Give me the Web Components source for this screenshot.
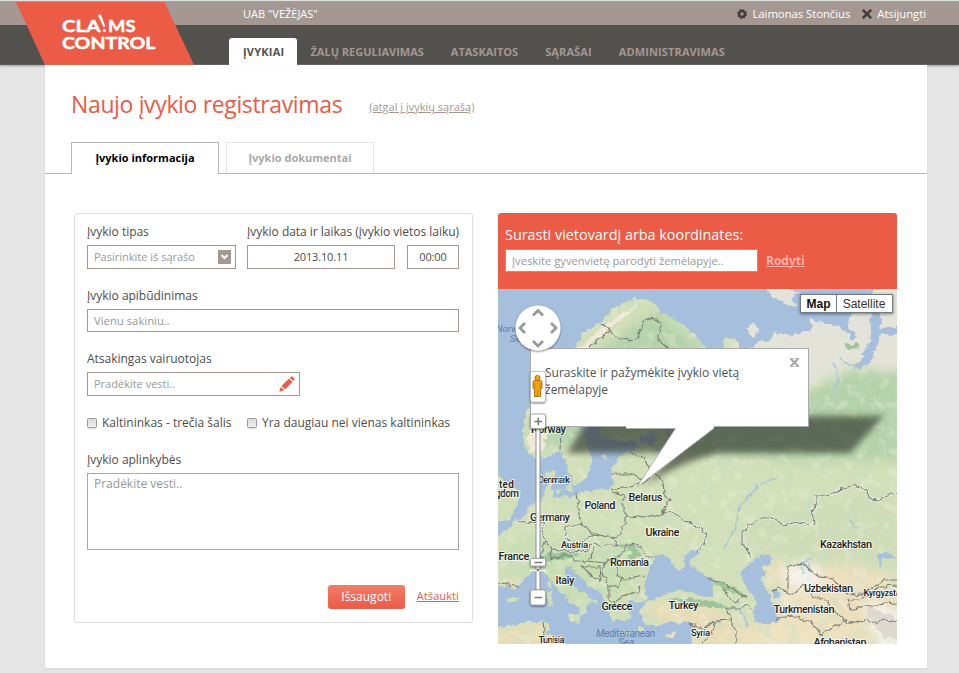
<!DOCTYPE html>
<html lang="lt">
<head>
<meta charset="utf-8">
<title>Claims Control</title>
<style>
html,body{margin:0;padding:0}
body{background:#e5e5e5;font:12px/16px "Open Sans","Noto Sans",sans-serif;color:#4d4d4d;width:959px;height:673px;overflow:hidden}
</style>
</head>
<body>
<claims-app></claims-app>
<script>
function define(name, html, setup){
  const t=document.createElement('template');
  t.innerHTML=html;
  customElements.define(name,class extends HTMLElement{
    connectedCallback(){
      if(this.shadowRoot)return;
      this.attachShadow({mode:'open'}).appendChild(t.content.cloneNode(true));
      if(setup)setup(this,this.shadowRoot);
    }
  });
}

define('claims-logo',`
<style>:host{display:block;width:178px;height:63px}svg{display:block}text{font-family:Lato,sans-serif;font-weight:700;fill:#fff;stroke:#fff;stroke-width:.5px;font-size:17.500px}</style>
<svg width="178" height="63" viewBox="16 2 178 63">
<path d="M16 2H164.500L194 65H45Z" fill="#eb5b45"/>
<text x="62" y="32" textLength="38.500" lengthAdjust="spacingAndGlyphs">CLA</text>
<path d="M97.800 15.200L100.800 14.300L105.300 26.500L103.700 27.200Z" fill="#fff"/><circle cx="104.300" cy="30.400" r="1.500" fill="#fff"/>
<text x="108" y="32" textLength="27.500" lengthAdjust="spacingAndGlyphs">MS</text>
<text x="62" y="48.500" textLength="93.500" lengthAdjust="spacingAndGlyphs">CONTROL</text>
</svg>`);

define('nav-item',`
<style>:host{display:block;box-sizing:border-box;height:27px;padding:0 13.500px;font-weight:700;font-size:11px;line-height:28px;color:#a59791;white-space:nowrap}
:host([active]){background:#fff;color:#53514e;border-radius:3px 3px 0 0;letter-spacing:.22px;width:68px;padding:0 0 0 14px}
:host([wide]){letter-spacing:.12px}</style><slot></slot>`);

define('user-link',`
<style>:host{display:flex;align-items:center;gap:5px;color:#fff}svg{display:block}</style>
<slot name="icon"></slot><span><slot></slot></span>`);

define('app-header',`
<style>
:host{display:grid;grid-template-columns:178px 1fr;grid-template-rows:25px 40px;height:65px;padding-left:16px;
background:linear-gradient(#dfe3e0 0 1px,#a5a09c 1px 2px,#a59791 2px 25px,#53514e 25px 64px,#5c5b59 64px 65px);box-shadow:0 1px 2px #999}
claims-logo{grid-row:1/3;margin-top:2px}
.top{display:flex;align-items:center;padding:3px 33px 0 49px;color:#fff;font-size:11px}
.top span{flex:1}.top user-link+user-link{margin-left:12px}.top user-link{font-size:11.400px;letter-spacing:-.08px}
nav{display:flex;align-items:flex-end;padding-left:35px}
</style>
<claims-logo></claims-logo>
<div class="top"><span>UAB "VEŽĖJAS"</span>
<user-link><svg slot="icon" width="10" height="10" viewBox="0 0 10 10"><circle cx="5" cy="5" r="3" fill="none" stroke="#423e3c" stroke-width="2.500"/><circle cx="5" cy="5" r="4.300" fill="none" stroke="#423e3c" stroke-width="1.200" stroke-dasharray="1.690 1.690"/></svg>Laimonas Stončius</user-link>
<user-link><svg slot="icon" width="10" height="10" viewBox="0 0 10 10"><path d="M.8 .8L9.200 9.200M9.200 .8L.8 9.200" stroke="#423e3c" stroke-width="2.600"/></svg>Atsijungti</user-link></div>
<nav><nav-item active>ĮVYKIAI</nav-item><nav-item>ŽALŲ REGULIAVIMAS</nav-item><nav-item>ATASKAITOS</nav-item><nav-item wide>SĄRAŠAI</nav-item><nav-item wide>ADMINISTRAVIMAS</nav-item></nav>`);

define('page-tab',`
<style>:host{display:block;box-sizing:border-box;width:148px;height:31px;border:1px solid #e5e5e5;border-bottom:0;text-align:center;font-weight:700;font-size:11px;line-height:29px;color:#a9a9a9;background:#fff}
:host([active]){height:32px;border-color:#b8b8b8;color:#000}</style><slot></slot>`);

define('page-heading',`
<style>:host{display:flex;align-items:flex-start;gap:27px;height:32px}
h1{margin:0;font-weight:400;font-size:23px;line-height:32px;letter-spacing:-.36px;color:#eb5b45}
a{font-size:11px;line-height:16px;margin-top:11px;color:#a59791;text-decoration:underline}</style><h1><slot></slot></h1><a><slot name="back"></slot></a>`);

define('text-field',`
<style>:host{display:flex;flex-direction:column;gap:5px}
label{height:16px;white-space:nowrap;letter-spacing:-.02px}
.box{box-sizing:border-box;height:var(--h,24px);border:1px solid #a59791;background:#fff;display:flex;align-items:center;justify-content:space-between;padding:0 6px;font-size:var(--fs,11px);color:#999;line-height:16px}
:host([center]) .box{justify-content:center;color:#4d4d4d;letter-spacing:-.15px}
:host([area]) .box{align-items:flex-start;padding-top:2px;border-color:#a9a9a9}</style>
<label></label><div class="box"><span><slot></slot></span><slot name="icon"></slot></div>`,
(el,r)=>{const l=r.querySelector('label');if(el.hasAttribute('label'))l.textContent=el.getAttribute('label');else if(!el.hasAttribute('blank'))l.remove()});

define('check-item',`
<style>:host{display:flex;align-items:center;gap:5px;height:16px;white-space:nowrap}
i{box-sizing:border-box;width:10px;height:10px;border:1px solid #9b9b9b;border-radius:1.500px;background:linear-gradient(#ddd,#eee);box-shadow:0 1px 1px #ddd}</style><i></i><span><slot></slot></span>`);

define('event-form',`
<style>
:host{display:block;box-sizing:border-box;width:399px;height:410px;border:1px solid #ddd;border-radius:3px;padding:10px 13px 0 12px}
.row{display:flex}.row+.row,text-field.line{margin-top:19px}
.acts{margin-top:35px;display:flex;justify-content:flex-end;gap:12px;align-items:center}
button{all:unset;box-sizing:border-box;width:77px;height:24px;border-radius:3px;background:linear-gradient(#f47c6c,#eb5b45);color:#fff;text-align:center;font-size:12px;line-height:24px}
a{color:#eb5b45;text-decoration:underline;font-size:11px;line-height:16px;margin-top:-2px;letter-spacing:.1px}
svg{display:block}
</style>
<div class="row"><text-field label="Įvykio tipas" style="width:149px">Pasirinkite iš sąrašo<svg slot="icon" width="13" height="14" style="margin-right:-2px"><path d="M0 0H13V14H0Z" fill="#a59791"/><path d="M3.500 5L6.500 8L9.500 5" fill="none" stroke="#fff" stroke-width="2"/></svg></text-field>
<text-field label="Įvykio data ir laikas (įvykio vietos laiku)" center style="width:148px;margin-left:11px">2013.10.11</text-field>
<text-field blank center style="width:52px;margin-left:12px">00:00</text-field></div>
<text-field class="line" label="Įvykio apibūdinimas" style="--h:23px;--fs:11.300px">Vienu sakiniu..</text-field>
<text-field class="line" label="Atsakingas vairuotojas" style="width:213px">Pradėkite vesti..<svg slot="icon" width="16" height="16" viewBox="0 0 16 16" style="margin-right:-2px"><g fill="#eb5b45"><path d="M.5 15.500L1.700 10.800L5.200 14.300Z"/><path d="M2.600 9.800L10.100 2.600L13.400 5.900L6.100 13.400Z"/><path d="M10.900 1.800L12.200.6Q13 .1 13.700.7L15.300 2.300Q15.800 3 15.300 3.800L14.200 5.100Z"/></g><path d="M.5 15.500L1 13.500L2.500 15Z" fill="#d34735"/></svg></text-field>
<div class="row" style="margin-top:19px"><check-item style="width:160px">Kaltininkas - trečia šalis</check-item><check-item>Yra daugiau nei vienas kaltininkas</check-item></div>
<text-field area label="Įvykio aplinkybės" style="--h:77px;--fs:12px;margin-top:21px">Pradėkite vesti..</text-field>
<div class="acts"><button>Išsaugoti</button><a>Atšaukti</a></div>`);

define('map-callout',`
<style>:host{position:absolute;left:32px;top:59px;width:279px;height:140px}
.box{box-sizing:border-box;width:279px;height:79px;background:#fff;border:1px solid #aaa;padding:15px 14px;font-size:12px;line-height:17px;color:#4c535b}
svg{position:absolute;left:0;top:0;pointer-events:none}</style>
<div class="box"><slot></slot></div>
<svg width="279" height="140" viewBox="530 348 279 140"><path d="M626 426H714V428.500L637 487L675.500 428.500H626Z" fill="#fff"/><path d="M714 428L637 487L675.500 428.500M626 428.500H675" fill="none" stroke="#aaa" stroke-width=".8"/><path d="M790 358.500H799M790 366.500H799" stroke="#ccc"/><path d="M790.500 358.500L798.500 366.500M798.500 358.500L790.500 366.500" stroke="#a5a5a5" stroke-width="2"/></svg>`);

define('map-controls',`
<style>:host{position:absolute;inset:0}svg{display:block}
.type{position:absolute;right:4px;top:5px;display:flex;box-sizing:border-box;height:19px;border:1px solid #717b87;background:#fff;box-shadow:0 1px 3px #0007;font:12px/18px "Liberation Sans",sans-serif;color:#333}
b,span{display:block;text-align:center}b{width:35px;border-right:1px solid #717b87;color:#111}span{width:54px;padding-right:1px}</style>
<svg width="399" height="355" viewBox="498 289 399 355">
<defs><filter id="sh" x="-30%" y="-30%" width="160%" height="170%"><feDropShadow dx="0" dy="1" stdDeviation="1.300" flood-opacity=".55"/></filter></defs>
<circle cx="538" cy="328" r="22.500" fill="#fff" filter="url(#sh)"/>
<path d="M533 315.500L538 310.500L543 315.500M533 341L538 346L543 341M525 323L520 328L525 333M551 323L556 328L551 333" fill="none" stroke="#999" stroke-width="2.800"/>
<rect x="530.500" y="371.500" width="15" height="30.500" rx="2" fill="#fff" stroke="#aaa" stroke-width=".6" filter="url(#sh)"/>
<g fill="#f2a50c" stroke="#a9690c" stroke-width=".9"><path d="M534.700 380.500H540.300Q542 380.500 542 382V388.500H540.500V396.500H534.500V388.500H533V382Q533 380.500 534.700 380.500Z"/><circle cx="537.500" cy="378" r="2.600"/><path d="M537.500 390V396M534.800 383V388M540.200 383V388" fill="none" stroke-width=".5"/></g>
<rect x="536" y="428" width="4" height="162" fill="#fff" stroke="#8a8f95" stroke-width="1"/><path d="M530 570.500H546" stroke="#fff"/><circle cx="538" cy="570" r="1.200" fill="#777"/>
<g fill="#fff" stroke="#9a9a9a" stroke-width=".8"><rect x="530.500" y="414" width="15" height="14.500" rx="2" filter="url(#sh)"/><rect x="530.500" y="558.500" width="15" height="7.500" rx="1" filter="url(#sh)"/><rect x="530.500" y="590" width="15" height="15" rx="2" filter="url(#sh)"/></g>
<path d="M534.500 421.500H542M538.200 417.800V425.200M534.500 562.500H542M534.500 597.500H542" stroke="#777" stroke-width="1.500"/>
</svg><div class="type"><b>Map</b><span>Satellite</span></div>`);

define('europe-map',`
<style>:host{display:block;position:relative;width:399px;height:355px;overflow:hidden;background:#a5bfdd}
svg.m{display:block}text{font-family:Roboto,sans-serif;font-weight:500;font-size:11px;fill:#222;stroke:#fff;stroke-opacity:.65;stroke-width:2px;paint-order:stroke}
.sea{font-style:italic;font-weight:400;fill:#5f7fad;stroke:none}</style>
<svg class="m" width="399" height="355" viewBox="498 289 399 355">
<defs>
<filter id="rough" filterUnits="userSpaceOnUse" x="480" y="270" width="440" height="400"><feTurbulence type="fractalNoise" baseFrequency=".16" numOctaves="3" seed="4"/><feDisplacementMap in="SourceGraphic" scale="7" xChannelSelector="R" yChannelSelector="G"/></filter>
<filter id="jag" filterUnits="userSpaceOnUse" x="480" y="270" width="440" height="400"><feTurbulence type="fractalNoise" baseFrequency=".16" numOctaves="2" seed="9"/><feDisplacementMap in="SourceGraphic" scale="6" xChannelSelector="R" yChannelSelector="G"/></filter>
<filter id="soft" x="-40%" y="-40%" width="180%" height="180%"><feGaussianBlur stdDeviation="6"/></filter>
<filter id="blur" x="-10%" y="-50%" width="120%" height="200%"><feGaussianBlur stdDeviation="3"/></filter>
<filter id="green" filterUnits="userSpaceOnUse" x="480" y="270" width="440" height="400"><feTurbulence type="fractalNoise" baseFrequency=".07" numOctaves="4" seed="12"/><feColorMatrix values="0 0 0 0 .54  0 0 0 0 .74  0 0 0 0 .54  4 0 0 0 -2"/></filter>
<filter id="pale" filterUnits="userSpaceOnUse" x="480" y="270" width="440" height="400"><feTurbulence type="fractalNoise" baseFrequency=".09" numOctaves="4" seed="31"/><feColorMatrix values="0 0 0 0 .92  0 0 0 0 .91  0 0 0 0 .75  0 5 0 0 -2.700"/></filter>
<mask id="land"><g filter="url(#rough)">
<path fill="#fff" d="M526 414L540 385L562 358L576 346L584 333L600 322L612 309L626 302L641 298L655 303L660 313L674 318L690 329L701 341L706 350L722 348L723 338L737 339L739 347L748 350L760 341L773 339L775 332L790 336L808 331L813 326L809 318L820 322L838 326L848 334L853 341L857 336L849 328L849 317L855 305L866 304L873 289H900V648H691L690 634L694 622L680 624L668 622L656 627L645 624L640 613L644 604L655 598L672 592L690 591L704 597L714 595L714 581L704 575L692 566L690 560L700 553L696 550L686 554L684 560L686 568L676 570L671 561L664 553L654 556L651 565L646 575L644 590L647 600L638 603L630 600L626 606L633 615L628 622L620 618L613 622L607 610L602 594L588 585L577 575L571 564L564 567L565 577L577 588L591 598L596 603L587 604L587 612L581 618L578 607L570 601L558 591L551 579L542 571L532 573L520 581L516 588L498 586L490 590V540L503 532L514 523L525 516L530 505L542 500L546 487L544 475L553 468L556 472L551 486L554 498L570 497L583 492L598 489L609 490L613 481L611 468L620 457L631 451L640 446L632 440L610 441L600 433L595 420L600 400L590 405L582 425L587 445L591 462L588 474L581 482L574 485L568 470L560 449L550 456L537 459L527 452L522 434Z"/>
<path fill="#fff" d="M490 470L501 478L511 487L521 491L518 505L509 520L490 525ZM490 629L515 625L532 621L548 622L548 632L553 639L565 646L490 650ZM764 286L772 297L784 303L797 307L790 298L799 292L785 286ZM749 326L754 324L759 330L754 337L748 332ZM567 614L580 614L578 624L570 620ZM546 593L552 590L553 604L548 607ZM549 581L552 577L552 588L548 587ZM666 634L677 631L673 637L667 637ZM617 631L632 631L627 634ZM505 600L520 596L515 602ZM567 485L573 484L572 491L566 490ZM638 626L645 628L645 634L638 630ZM601 456L607 452L605 461ZM553 490L560 488L560 494Z"/>
<path fill="#000" d="M740 575L747 565L756 558L764 554L773 556L771 565L762 568L765 573L760 579L767 588L770 600L776 608L779 621L767 625L755 621L752 611L756 603L750 591L744 583ZM772 589L780 592L781 598L773 597ZM874 300L881 318L880 332L877 347L870 363L858 371L855 365L865 353L871 337L870 318ZM879 328L898 326V335L880 335ZM878 552L888 554L897 558L890 559L883 558L880 569ZM640 435L655 432L659 440L650 445L640 441ZM662 423L672 427L670 438ZM802 562L804 572L802 574ZM808 560L811 573L808 572ZM645 598L657 596L652 601ZM690 389L706 378L716 384L706 395L694 392Z"/>
</g></mask>
</defs>
<g mask="url(#land)"><path fill="#d3dfb9" d="M490 280H910V650H490Z"/>
<g filter="url(#soft)">
<path fill="#b2d2a9" d="M600 350L655 310L715 355L800 398L840 372L905 362V460L810 462L700 455L650 430L600 440L550 447L527 435Z"/>
<path fill="#cfdcb7" d="M750 520L895 490V565L820 570L755 555Z"/>
<path fill="#ecdfbd" d="M760 560L850 565L897 575V650H640L695 624L770 627L780 600Z"/>
<path fill="#c9ddb2" d="M505 540H640V600H505Z"/>
<path fill="#e8ddb8" d="M645 600L710 602L735 620L720 650H680ZM490 626H560V650H490ZM500 580H540V592H500Z"/>
<path fill="#efe2c0" d="M765 622L835 630L858 650H740Z"/></g>
<path filter="url(#soft)" fill="#f4f3ef" d="M785 565H817L823 585L800 592L785 580ZM775 590L792 600L780 607ZM865 600L900 612V650H879Z"/>
<rect x="498" y="375" width="399" height="269" filter="url(#green)" opacity=".38"/><rect x="498" y="289" width="399" height="355" filter="url(#pale)" opacity=".28"/>
<path filter="url(#soft)" fill="#e4e3d9" d="M735 270H925V368L880 372L862 362L830 376L795 392L770 370H735Z"/>
<g filter="url(#rough)"><path d="M527 435L540 400L577 350L613 318L640 303L618 322L590 345L552 415L543 450L530 452Z" fill="#f1ead8"/><path d="M545 554L563 550L580 549L573 558L552 560L540 568ZM613 544L635 545L642 557L625 560L633 551L617 548ZM708 578L738 589L745 596L726 590ZM665 598L708 600L734 609L700 607ZM845 345L856 343L857 348L847 350Z" fill="#9dc59b"/><path d="M866 605L894 617L902 640L884 637L870 621Z" fill="#ddd9d0"/></g>
<g fill="none" stroke="#a5bfdd" stroke-width="1.200" filter="url(#jag)"><path d="M758 485L748 497L739 508L735 530L723 549M760 484L777 478M835 365L838 378L834 390M653 446L660 452L665 465M856 370L840 358M669 425L683 418M800 565L812 557M850 520L856 528M617 495L625 510M579 425L587 440M740 610L748 625"/></g>
</g>
<g fill="none" stroke-linejoin="round" filter="url(#jag)">
<path stroke="#fff" stroke-opacity=".55" stroke-width="2.800" d="M581 524L565 528L567 540L577 545L589 537L600 534M612 538L618 546L604 546L590 543L588 550L572 552L553 549L544 541L542 530L545 523L525 522L516 520M661 514L666 511L678 515L686 522L699 528L707 534L703 545L697 552M751 558L748 549L742 543L742 532L752 523L762 518L772 518L783 525L798 522L816 524L811 512L816 502L816 496L833 494L843 488L856 485L866 490L870 499L880 500L889 495L900 492"/>
<path stroke="#7c7c76" stroke-width="1.100" d="M560 449L561 435L566 420L563 402L580 370L591 347L610 330L619 340L637 339L643 322L653 317L661 325L658 340L670 350L662 371L667 400L650 424M610 330L602 324M628 452L645 458L650 470L646 482L630 487L611 490M612 474L630 474L643 479M650 470L662 479L665 495L670 500L661 514L645 517L627 516L623 510L624 495L612 492M576 493L578 508L581 524L593 533L612 538L619 535L625 525L625 516M581 524L565 528L567 540L577 545L589 537L600 534M612 538L618 546L604 546L590 543L588 550L572 552L553 549L544 541L542 530L545 523L525 522L516 520M544 541L543 552L537 566L543 571M553 549L550 558L560 556L572 556L573 561L588 561L595 548M588 561L604 563L617 558L628 544L638 545L647 556L652 559M617 558L617 575L623 580L645 576M604 563L602 574L609 585L618 588L621 578M582 567L600 567L601 581L590 575ZM609 585L609 600L615 604L622 595L638 593L640 587M661 514L666 511L678 515L686 522L699 528L707 534L703 545L697 552M751 558L748 549L742 543L742 532L752 523L762 518L772 518L783 525L798 522L816 524L811 512L816 502L816 496L833 494L843 488L856 485L866 490L870 499L880 500L889 495L900 492M772 590L778 587L788 594H794L804 585L813 597L825 600L833 611L843 618L848 621M794 594H788V567L803 563L820 577L833 579L841 587L850 595L862 594L873 587L885 580L900 580M848 600H858L870 595L879 587L900 586M848 600L850 610L865 606L897 603M776 618L794 616L810 622L817 628L820 634L834 628L843 620L851 624L866 619L870 624L884 620L900 622M735 644L736 632L732 620L727 608L740 608L748 605L752 610M706 578L722 583L735 591L747 597L742 597M724 588L729 598L736 604L740 599M731 620L715 621L703 628L689 624M715 621L711 634L700 646M543 622L545 632L541 646M498 584L510 585L519 587"/></g>
<path d="M590 416H884L850 453H718Q680 462 645 485L675 453H567Z" fill="#252b20" opacity=".62" filter="url(#blur)"/>
<text class="sea" x="496" y="332" style="font-size:9.500px">Norwegian</text><text class="sea" x="510" y="341.500" style="font-size:9.500px">Sea</text>
<text x="531" y="433" textLength="35">Norway</text>
<text x="538" y="482.500" textLength="32" style="font-size:9.500px">Denmark</text>
<text x="490" y="488" textLength="24" style="font-size:10px">nited</text><text x="482" y="497" textLength="37" style="font-size:10px">Kingdom</text>
<text x="584.500" y="509" textLength="31">Poland</text><text x="628.500" y="501" textLength="34">Belarus</text>
<text x="530" y="521" textLength="40">Germany</text><text x="645.500" y="536" textLength="34">Ukraine</text>
<text x="561" y="547.500" textLength="27" style="font-size:9.500px">Austria</text><text x="498.500" y="560" textLength="31">France</text>
<text x="610" y="565.500" textLength="39">Romania</text><text x="555.500" y="583.500" textLength="19">Italy</text>
<text x="601.500" y="609.500" textLength="31">Greece</text><text x="668.500" y="608.500" textLength="30">Turkey</text>
<text class="sea" x="596" y="637" textLength="59" style="font-size:10px">Mediterranean</text><text class="sea" x="618" y="646" style="font-size:10px">Sea</text>
<text x="538.500" y="643" textLength="26" style="font-size:9.500px">Tunisia</text><text x="691" y="636" textLength="19" style="font-size:9.500px">Syria</text>
<text x="820" y="547.500" textLength="52">Kazakhstan</text><text x="804" y="592" textLength="49">Uzbekistan</text>
<text x="863.500" y="595.500" textLength="42" style="font-size:9.500px">Kyrgyzstan</text><text x="773.500" y="613" textLength="61">Turkmenistan</text><text x="813.500" y="645.500" textLength="53">Afghanistan</text>
</svg>
<map-callout>Suraskite ir pažymėkite įvykio vietą<br>žemėlapyje</map-callout><map-controls></map-controls>`);

define('map-panel',`
<style>:host{display:block;width:399px}
.head{box-sizing:border-box;height:76px;background:#eb5b45;border-radius:3px 3px 0 0;padding:11px 7px 0;color:#fff}
h2{margin:0;font-size:14.400px;font-weight:400;line-height:22px;height:25px;white-space:nowrap}
.find{display:flex;align-items:center;gap:8px}text-field{width:253px;--h:23px;--fs:11.200px}a{font-weight:700;text-decoration:underline;color:#ffb2a5}</style>
<div class="head"><h2>Surasti vietovardį arba koordinates:</h2><div class="find"><text-field>Įveskite gyvenvietę parodyti žemėlapyje..</text-field><a>Rodyti</a></div></div><europe-map></europe-map>`);

define('claims-app',`
<style>:host{display:block}
main{box-sizing:border-box;width:882px;height:603px;margin-left:45px;background:#fff;position:relative;box-shadow:0 1px 2px #d5d5d5;padding-top:23px}
page-heading{margin-left:26px}
.tabs{display:flex;gap:7px;margin-top:22px;padding-left:26px;height:32px;background:linear-gradient(#b8b8b8,#b8b8b8) 0 31px/100% 1px no-repeat}
.cols{display:flex;gap:25px;padding:39px 0 0 29px}</style>
<app-header></app-header>
<main><page-heading>Naujo įvykio registravimas<span slot="back">(atgal į įvykių sąrašą)</span></page-heading>
<div class="tabs"><page-tab active>Įvykio informacija</page-tab><page-tab>Įvykio dokumentai</page-tab></div>
<div class="cols"><event-form></event-form><map-panel></map-panel></div></main>`);
</script>
</body>
</html>
